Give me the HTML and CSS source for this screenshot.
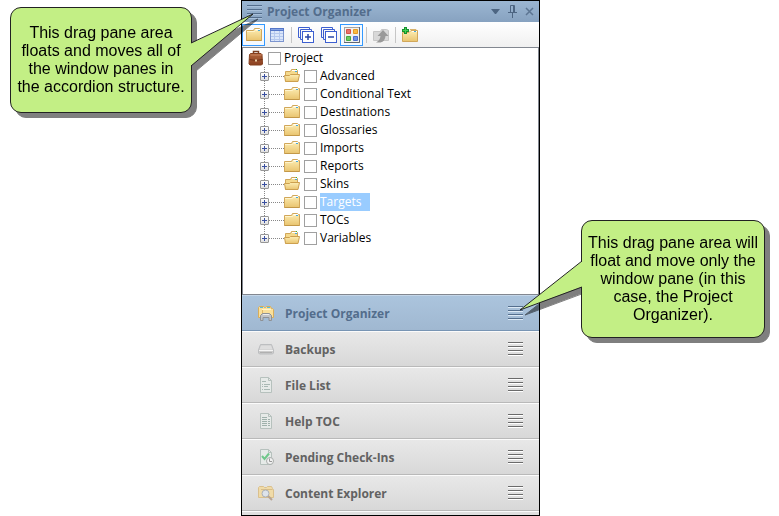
FILE: index.html
```html
<!DOCTYPE html>
<html lang="en">
<head>
<meta charset="utf-8">
<title>Project Organizer</title>
<link rel="stylesheet" href="styles.css">
</head>
<body>
<svg class="sprite" aria-hidden="true">
  <defs>
    <linearGradient id="gold" x1="0" y1="0" x2="0" y2="1"><stop offset="0" stop-color="#fdeeb5"/><stop offset="1" stop-color="#e9c46f"/></linearGradient>
    <linearGradient id="leather" x1="0" y1="0" x2="0" y2="1"><stop offset="0" stop-color="#b0633c"/><stop offset="1" stop-color="#8a4020"/></linearGradient>
  </defs>
  <symbol id="folder" viewBox="0 0 16 16">
    <path d="M.5 3.500H7.500L8.500 1.500h5l1 1h1v11H.5z" fill="url(#gold)" stroke="#d1a75a"/>
    <path d="M9.500 2.500h4.500" stroke="#fff"/><path d="M12 3.500h2" stroke="#45a9d8"/>
    <path d="M1 4.500h7.500l1-1h2" fill="none" stroke="#fff4cc"/><path d="M.5 13.500h15" stroke="#c39848"/>
  </symbol>
  <symbol id="folder-open" viewBox="0 0 16 16">
    <path d="M1.500 13.500v-10h5l1-2h5l1 1v5" fill="#f4d98c" stroke="#d1a75a"/>
    <path d="M8 2.500h5" stroke="#fff"/><path d="M11 3.500h2" stroke="#45a9d8"/><path d="M12 1.500h1" stroke="#35b534"/>
    <path d="M.5 7.500h5l1-1h9l-1.500 7H1.500z" fill="url(#gold)" stroke="#cda04f"/>
  </symbol>
  <symbol id="briefcase" viewBox="0 0 16 16">
    <path d="M5.500 4V1.500h5V4" fill="none" stroke="#7a3b1f" stroke-width="1.500"/>
    <path d="M1.500 4.500l1-1h10.500l1 1 .5 9.500-1 1H2l-1-1z" fill="url(#leather)" stroke="#85401f"/>
    <path d="M1.500 9.500q6.500 2 13 0" fill="none" stroke="#70321a"/><path d="M2.500 5h11" stroke="#ca8560"/>
    <path d="M7 9.500h2v2H7z" fill="#ecd1a9"/>
  </symbol>
  <symbol id="table" viewBox="0 0 16 16">
    <rect x="1.500" y="1.500" width="13" height="13" fill="#dbe6fa" stroke="#7c95cf"/>
    <path d="M1 1h14v3H1z" fill="#5577c8"/><path d="M2 2.500h12" stroke="#86a5e4"/>
    <path d="M2 6.500h12M2 9.500h12M2 12.500h12M5.500 4v10M10.500 4v10" stroke="#b5c8ee"/>
  </symbol>
  <symbol id="stack" viewBox="0 0 16 16">
    <path d="M11.500 2V.5h-11v10H2M13.500 4V2.500h-11v10H4" fill="none" stroke="#3c5fd0"/>
    <rect x="4.500" y="4.500" width="11" height="11" fill="#fff" stroke="#3c5fd0"/>
  </symbol>
  <symbol id="tiles" viewBox="0 0 16 16">
    <rect x=".5" y=".5" width="15" height="15" fill="#f1f1ed" stroke="#a4a4a4"/><path d="M15.500 0v15.500H0" fill="none" stroke="#5f6774"/>
    <path d="M2.500 2.500h4v4h-4z" fill="#e8716a" stroke="#d55248"/><path d="M9.500 2.500h4v4h-4z" fill="#f9bb40" stroke="#e69924"/>
    <path d="M2.500 9.500h4v4h-4z" fill="#6cca5c" stroke="#44a83f"/><path d="M9.500 9.500h4v4h-4z" fill="#7393e6" stroke="#4a6ed0"/>
  </symbol>
  <symbol id="export" viewBox="0 0 16 16">
    <path d="M.5 4.500h7l1-2h5l2 1v10H.5z" fill="#d8d8d8" stroke="#c6c6c6"/>
    <path d="M10 3l5.500 6H12.500q-.5 5.500-5 6.500H3q4-2 4.500-6.500H4.500z" fill="#999"/>
  </symbol>
  <symbol id="folder-add" viewBox="0 0 16 16">
    <path d="M.5 5.500H7l2-2h6.500v11H.5z" fill="url(#gold)" stroke="#d1a75a"/>
    <path d="M8 2.500h6l1 1" fill="none" stroke="#d8b26a"/><path d="M10 4.500h5" stroke="#fff"/><path d="M12 4.500h2" stroke="#45a9d8"/>
    <path d="M2 0h3v2h2v3H5v2H2V5H0V2h2z" fill="#17912e"/><path d="M3 1h1v2h2v1H4v2H3V4H1V3h2z" fill="#44d456"/>
  </symbol>
  <symbol id="organizer" viewBox="0 0 16 16">
    <path d="M.5 12.500V2.500l1-1h4l1 1h1l1-1h4l1 2h1l1 1v8z" fill="#fae09a" stroke="#d8ad5b"/>
    <path d="M2 2.500h3M9 2.500h3" stroke="#53bbe5"/><path d="M4 4.500h9" stroke="#fff3cd"/><path d="M4.500 5v4" stroke="#e0b767"/>
    <path d="M2.500 15.500v-5l2-2h7l2 2v5h-2.500v-3h-6v3z" fill="#c1c3c5" stroke="#8e9195"/><path d="M5 9.500h6" stroke="#ededed"/>
  </symbol>
  <symbol id="drive" viewBox="0 0 16 16">
    <path d="M.5 9l2-5.500h11l2 5.500v3l-1 1h-13l-1-1z" fill="#ccc" stroke="#bcbec0"/>
    <path d="M3 4.500h10l1.500 4h-13z" fill="#dedede"/><path d="M1 9.500h14" stroke="#f5f5f5"/><path d="M2 11.500h12" stroke="#b0b0b0"/>
  </symbol>
  <symbol id="page" viewBox="0 0 16 16">
    <path d="M2.500.5h8l3 3v12h-11z" fill="#e6eae8" stroke="#b6c1bd"/><path d="M10.500.5v3h3" fill="none" stroke="#b6c1bd"/>
    <path d="M4 4.500h4M4 7.500h1m1 0h6M4 9.500h1m1 0h4M4 12.500h1m1 0h6" stroke="#a8b8b3"/>
  </symbol>
  <symbol id="toc" viewBox="0 0 16 16">
    <path d="M2.500.5h8l3 3v12h-11z" fill="#e6eae8" stroke="#b6c1bd"/><path d="M10.500.5v3h3" fill="none" stroke="#b6c1bd"/>
    <path d="M4 4.500h5M4 6.500h5m1 0h2M4 8.500h5m1 0h2M4 10.500h5m1 0h2M4 12.500h5m1 0h2" stroke="#9fb1ab"/>
  </symbol>
  <symbol id="pending" viewBox="0 0 16 16">
    <path d="M2.500.5h8l3 3v12h-11z" fill="#e6eae8" stroke="#b6c1bd"/><path d="M10.500.5v3h3" fill="none" stroke="#b6c1bd"/>
    <path d="M4 7l2.500 3L11 4.500" fill="none" stroke="#6fc78a" stroke-width="2"/>
    <circle cx="12" cy="12" r="3.500" fill="#f1f1f1" stroke="#a9adab"/><path d="M11.500 9.500v3H14" fill="none" stroke="#999"/>
  </symbol>
  <symbol id="explorer" viewBox="0 0 16 16">
    <path d="M.5 12.500v-10l1-1h4l1 1h2l1-1h4l1 2v1h1v8z" fill="#f0dba8" stroke="#dac08d"/>
    <path d="M3 4.500h11" stroke="#d8bd87"/><circle cx="7.500" cy="8.500" r="3.500" fill="#dde3ea" stroke="#abb0b8"/>
    <path d="M10 11l4 4" stroke="#b7a493" stroke-width="2"/>
  </symbol>
</svg>

<main class="stage">
  <aside class="callout callout-left">
    <svg class="tail" width="64" height="56" aria-hidden="true"><polygon class="tail-fill" points="0,31 2,31 63,2 2,53 0,53"/><polyline class="tail-line" points="1,31 63,2 1,54"/></svg>
    <p>This drag pane area<br>floats and moves all of<br>the window panes in<br>the accordion structure.</p>
  </aside>

  <section class="panel">
    <header class="titlebar">
      <span class="grip"></span>
      <h1>Project Organizer</h1>
      <button type="button" aria-label="Window menu"><svg width="9" height="9"><path d="M0 2h9L5 7H4z" fill="#4d6582"/></svg></button>
      <button type="button" aria-label="Auto hide"><svg width="9" height="13"><path d="M2.500 7.500v-7h4v7M0 7.500h9M4.500 8v5M5.500 1v6" fill="none" stroke="#4d6582"/></svg></button>
      <button type="button" aria-label="Close"><svg width="9" height="9"><path d="M1 1l7 7M8 1L1 8" stroke="#5c7592" stroke-width="1.500"/></svg></button>
    </header>

    <div class="toolbar">
      <button type="button" class="tool on" aria-label="Show folders"><svg class="icon"><use href="#folder"/></svg></button>
      <button type="button" class="tool" aria-label="Show files"><svg class="icon"><use href="#table"/></svg></button>
      <span class="sep"></span>
      <button type="button" class="tool" aria-label="Expand all"><svg class="icon"><use href="#stack"/><path d="M7 10h6M10 7v6" stroke="#2846a8" stroke-width="1.500"/></svg></button>
      <button type="button" class="tool" aria-label="Collapse all"><svg class="icon"><use href="#stack"/><path d="M7 10h6" stroke="#2846a8" stroke-width="1.500"/></svg></button>
      <button type="button" class="tool on" aria-label="Show tiles"><svg class="icon"><use href="#tiles"/></svg></button>
      <span class="sep"></span>
      <button type="button" class="tool" aria-label="Open" disabled><svg class="icon"><use href="#export"/></svg></button>
      <span class="sep"></span>
      <button type="button" class="tool" aria-label="New folder"><svg class="icon"><use href="#folder-add"/></svg></button>
    </div>

    <div class="tree">
      <div class="node root"><svg class="icon"><use href="#briefcase"/></svg><input type="checkbox" id="n0"><label for="n0">Project</label></div>
      <ul>
        <li class="node"><button type="button" class="expand" aria-label="Expand Advanced"></button><span class="dots"></span><svg class="icon"><use href="#folder-open"/></svg><input type="checkbox" id="n1"><label for="n1">Advanced</label></li>
        <li class="node"><button type="button" class="expand" aria-label="Expand Conditional Text"></button><span class="dots"></span><svg class="icon"><use href="#folder"/></svg><input type="checkbox" id="n2"><label for="n2">Conditional Text</label></li>
        <li class="node"><button type="button" class="expand" aria-label="Expand Destinations"></button><span class="dots"></span><svg class="icon"><use href="#folder"/></svg><input type="checkbox" id="n3"><label for="n3">Destinations</label></li>
        <li class="node"><button type="button" class="expand" aria-label="Expand Glossaries"></button><span class="dots"></span><svg class="icon"><use href="#folder"/></svg><input type="checkbox" id="n4"><label for="n4">Glossaries</label></li>
        <li class="node"><button type="button" class="expand" aria-label="Expand Imports"></button><span class="dots"></span><svg class="icon"><use href="#folder"/></svg><input type="checkbox" id="n5"><label for="n5">Imports</label></li>
        <li class="node"><button type="button" class="expand" aria-label="Expand Reports"></button><span class="dots"></span><svg class="icon"><use href="#folder"/></svg><input type="checkbox" id="n6"><label for="n6">Reports</label></li>
        <li class="node"><button type="button" class="expand" aria-label="Expand Skins"></button><span class="dots"></span><svg class="icon"><use href="#folder-open"/></svg><input type="checkbox" id="n7"><label for="n7">Skins</label></li>
        <li class="node selected"><button type="button" class="expand" aria-label="Expand Targets"></button><span class="dots"></span><svg class="icon"><use href="#folder"/></svg><input type="checkbox" id="n8"><label for="n8">Targets</label></li>
        <li class="node"><button type="button" class="expand" aria-label="Expand TOCs"></button><span class="dots"></span><svg class="icon"><use href="#folder"/></svg><input type="checkbox" id="n9"><label for="n9">TOCs</label></li>
        <li class="node"><button type="button" class="expand" aria-label="Expand Variables"></button><span class="dots"></span><svg class="icon"><use href="#folder-open"/></svg><input type="checkbox" id="n10"><label for="n10">Variables</label></li>
      </ul>
    </div>

    <nav class="accordion">
      <button type="button" class="bar active"><svg class="icon"><use href="#organizer"/></svg><span class="name">Project Organizer</span><span class="grip"></span></button>
      <button type="button" class="bar"><svg class="icon"><use href="#drive"/></svg><span class="name">Backups</span><span class="grip"></span></button>
      <button type="button" class="bar"><svg class="icon"><use href="#page"/></svg><span class="name">File List</span><span class="grip"></span></button>
      <button type="button" class="bar"><svg class="icon"><use href="#toc"/></svg><span class="name">Help TOC</span><span class="grip"></span></button>
      <button type="button" class="bar"><svg class="icon"><use href="#pending"/></svg><span class="name">Pending Check-Ins</span><span class="grip"></span></button>
      <button type="button" class="bar"><svg class="icon"><use href="#explorer"/></svg><span class="name">Content Explorer</span><span class="grip"></span></button>
    </nav>
    <footer class="strip"></footer>
  </section>

  <aside class="callout callout-right">
    <svg class="tail" width="64" height="56" aria-hidden="true"><polygon class="tail-fill" points="64,5 62,5 1,53 62,30 64,30"/><polyline class="tail-line" points="63,4 1,53 63,30"/></svg>
    <p>This drag pane area will<br>float and move only the<br>window pane (in this<br>case, the Project<br>Organizer).</p>
  </aside>
</main>
</body>
</html>
```

FILE: styles.css
```css
* { box-sizing: border-box; }

body {
  margin: 0;
  background: #fff;
  color: #000;
  font-family: "Open Sans", "Noto Sans", sans-serif;
  font-size: 12px;
}

button {
  margin: 0;
  padding: 0;
  border: 0;
  background: none;
  font: inherit;
  color: inherit;
}

svg { display: block; flex: none; }
.sprite { position: absolute; width: 0; height: 0; }
.icon { width: 16px; height: 16px; }

.stage {
  display: grid;
  grid-template-columns: 241fr 299fr 239fr;
  align-items: start;
  min-height: 100vh;
}

/* Callouts */
.callout {
  position: relative;
  z-index: 1;
  border: 1px solid #222;
  border-radius: 11px;
  background: #c3ef85;
  filter: drop-shadow(5px 5px 0 rgba(0, 0, 0, 0.5));
  font-family: "Liberation Sans", Arial, sans-serif;
  font-size: 16px;
  line-height: 18px;
  text-align: center;
  white-space: nowrap;
}
.callout p { margin: 0; }
.callout-left { margin: 7px 49px 0 10px; padding: 16px 0; }
.callout-right { margin: 220px 14px 0 41px; padding: 13px 0; }
.tail { position: absolute; overflow: visible; }
.tail-fill { fill: #c3ef85; }
.tail-line { fill: none; stroke: #222; }
.callout-left .tail { left: calc(100% - 1px); top: 4px; }
.callout-right .tail { right: calc(100% - 1px); top: 36px; }

/* Panel */
.panel {
  display: flex;
  flex-direction: column;
  align-self: stretch;
  border: 1px solid #000;
}

.grip {
  width: 15px;
  height: 14px;
  background: repeating-linear-gradient(#6b6b6b 0 1px, #fff 1px 2px, transparent 2px 4px);
}

.titlebar {
  display: flex;
  align-items: center;
  gap: 8px;
  height: 21px;
  padding: 0 5px;
  background: linear-gradient(#9bb6d2, #87a2c0);
  color: #536d8c;
}
.titlebar h1 {
  flex: 1;
  margin: 0 0 0 -3px;
  font-size: 12px;
  line-height: 20px;
}
.titlebar .grip {
  background: repeating-linear-gradient(#546e8d 0 1px, #a8c0da 1px 2px, transparent 2px 4px);
}

.toolbar {
  display: flex;
  align-items: center;
  height: 25px;
  background: linear-gradient(#fff, #f0f0f0);
}
.tool {
  display: grid;
  place-items: center;
  width: 23px;
  height: 22px;
  border: 1px solid transparent;
}
.tool.on { border-color: #3399ff; background: #f5f9fe; }
.sep {
  width: 1px;
  height: 16px;
  margin: 0 2px 0 3px;
  background: #c6c6c6;
}

.tree {
  flex: 1;
  padding: 1px 0 0 5px;
  border: 1px solid #828790;
  background: #fff;
}
.tree ul {
  margin: 0 0 0 12px;
  padding: 0;
  list-style: none;
}
.node {
  display: flex;
  align-items: center;
  height: 18px;
}
.node label { line-height: 18px; padding: 0 3px 0 0; margin-left: 3px; }
.node input {
  appearance: none;
  width: 13px;
  height: 13px;
  margin: 0 0 0 4px;
  border: 1px solid #a0a0a0;
  background: #fff;
}
.selected label {
  padding-right: 9px;
  background: #99ccff;
  color: #fff;
}
.tree li {
  background: repeating-linear-gradient(#888 0 1px, transparent 1px 2px) 4px 0 / 1px 100% no-repeat;
}
.tree li:last-child { background-size: 1px 9px; }
.expand {
  width: 9px;
  height: 9px;
  border: 1px solid #969696;
  border-radius: 1px;
  background:
    linear-gradient(#3a50a0, #3a50a0) center / 5px 1px no-repeat,
    linear-gradient(#3a50a0, #3a50a0) center / 1px 5px no-repeat,
    linear-gradient(#fff, #e0e0e0);
}
.dots {
  width: 15px;
  height: 1px;
  background: repeating-linear-gradient(90deg, #888 0 1px, transparent 1px 2px);
}

/* Accordion */
.accordion { display: flex; flex-direction: column; }
.bar {
  display: flex;
  align-items: center;
  gap: 11px;
  height: 36px;
  padding: 0 16px;
  border-top: 1px solid #fbfbfb;
  border-bottom: 1px solid #b9b9b9;
  background: linear-gradient(#e8e8e8, #d8d8d8);
  color: #626262;
  font-weight: 700;
  text-align: left;
}
.name { flex: 1; }
.bar.active {
  border-top-color: #c4d6e8;
  border-bottom-color: #7895b4;
  background: linear-gradient(#abc4dd, #a0b8d1);
  color: #536d8c;
}
.active .grip {
  background: repeating-linear-gradient(#546e8d 0 1px, #dce9f5 1px 2px, transparent 2px 4px);
}
.strip { height: 4px; border-top: 1px solid #fbfbfb; background: #e0e0e0; }
```
